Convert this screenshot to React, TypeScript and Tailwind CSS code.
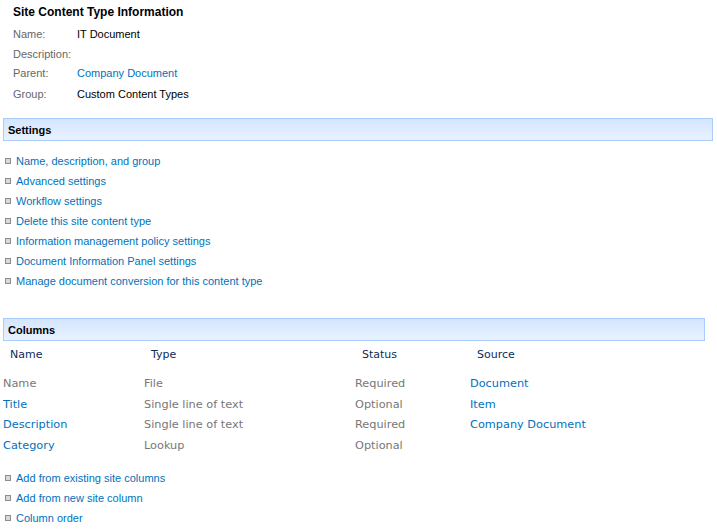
import React from 'react'

const link = 'text-[#0072bc] hover:underline cursor-pointer'

const settingsLinks = [
  'Name, description, and group',
  'Advanced settings',
  'Workflow settings',
  'Delete this site content type',
  'Information management policy settings',
  'Document Information Panel settings',
  'Manage document conversion for this content type',
]

const columnLinks = ['Add from existing site columns', 'Add from new site column', 'Column order']

const columns = [
  { name: 'Name', type: 'File', status: 'Required', source: 'Document', nameLink: false },
  { name: 'Title', type: 'Single line of text', status: 'Optional', source: 'Item', nameLink: true },
  { name: 'Description', type: 'Single line of text', status: 'Required', source: 'Company Document', nameLink: true },
  { name: 'Category', type: 'Lookup', status: 'Optional', source: '', nameLink: true },
]

function Bullet() {
  return <span className="inline-block w-[6px] h-[6px] border border-[#8c8c8c] bg-[#d9d9d9] mr-[5px] shrink-0" />
}

function LinkList({ items }: { items: string[] }) {
  return (
    <ul className="pl-[5px]">
      {items.map(t => (
        <li key={t} className="h-[20px] flex items-center">
          <Bullet />
          <a className={link}>{t}</a>
        </li>
      ))}
    </ul>
  )
}

function SectionBar({ title, className }: { title: string; className: string }) {
  return (
    <div className={`h-[23px] border border-[#a8cdfd] bg-gradient-to-b from-[#d4e5fe] to-[#e9f2ff] flex items-center pl-[4px] pt-[1px] font-bold text-black ${className}`}>
      {title}
    </div>
  )
}

export default function App() {
  const cell = 'flex items-center'
  const verdana = { fontFamily: '"DejaVu Sans", Verdana, sans-serif' }
  return (
    <div className="w-[717px] h-[530px] bg-white overflow-hidden text-[11px] text-black" style={{ fontFamily: '"Liberation Sans", Arial, sans-serif' }}>
      <div className="h-[24px] flex items-center pl-[13px] font-bold text-[12px]">Site Content Type Information</div>
      <div className="grid grid-cols-[64px_1fr] grid-rows-[20px_21px_17px_24px] pl-[13px]">
        <div className={`${cell} text-[#666]`}>Name:</div>
        <div className={cell}>IT Document</div>
        <div className={`${cell} text-[#666]`}>Description:</div>
        <div className={cell}></div>
        <div className={`${cell} text-[#666]`}>Parent:</div>
        <div className={cell}><a className={link}>Company Document</a></div>
        <div className={`${cell} text-[#666]`}>Group:</div>
        <div className={cell}>Custom Content Types</div>
      </div>

      <SectionBar title="Settings" className="mt-[12px] ml-[3px] mr-[4px]" />
      <div className="mt-[10px]">
        <LinkList items={settingsLinks} />
      </div>

      <SectionBar title="Columns" className="mt-[27px] ml-[3px] mr-[12px]" />
      <div className="mt-[4px] h-[20px] grid grid-cols-[141px_211px_115px_1fr] pl-[10px] text-[#0f2a5c]" style={verdana}>
        <div className={cell}>Name</div>
        <div className={cell}>Type</div>
        <div className={cell}>Status</div>
        <div className={cell}>Source</div>
      </div>
      <div className="mt-[9px] pl-[3px] grid grid-cols-[141px_211px_115px_1fr] grid-rows-[21px_20px_21px_20px] text-[#777] text-[11.3px]" style={verdana}>
        {columns.map(c => (
          <React.Fragment key={c.name}>
            <div className={cell}>{c.nameLink ? <a className={link}>{c.name}</a> : c.name}</div>
            <div className={cell}>{c.type}</div>
            <div className={cell}>{c.status}</div>
            <div className={cell}>{c.source && <a className={link}>{c.source}</a>}</div>
          </React.Fragment>
        ))}
      </div>

      <div className="mt-[12px]">
        <LinkList items={columnLinks} />
      </div>
    </div>
  )
}
